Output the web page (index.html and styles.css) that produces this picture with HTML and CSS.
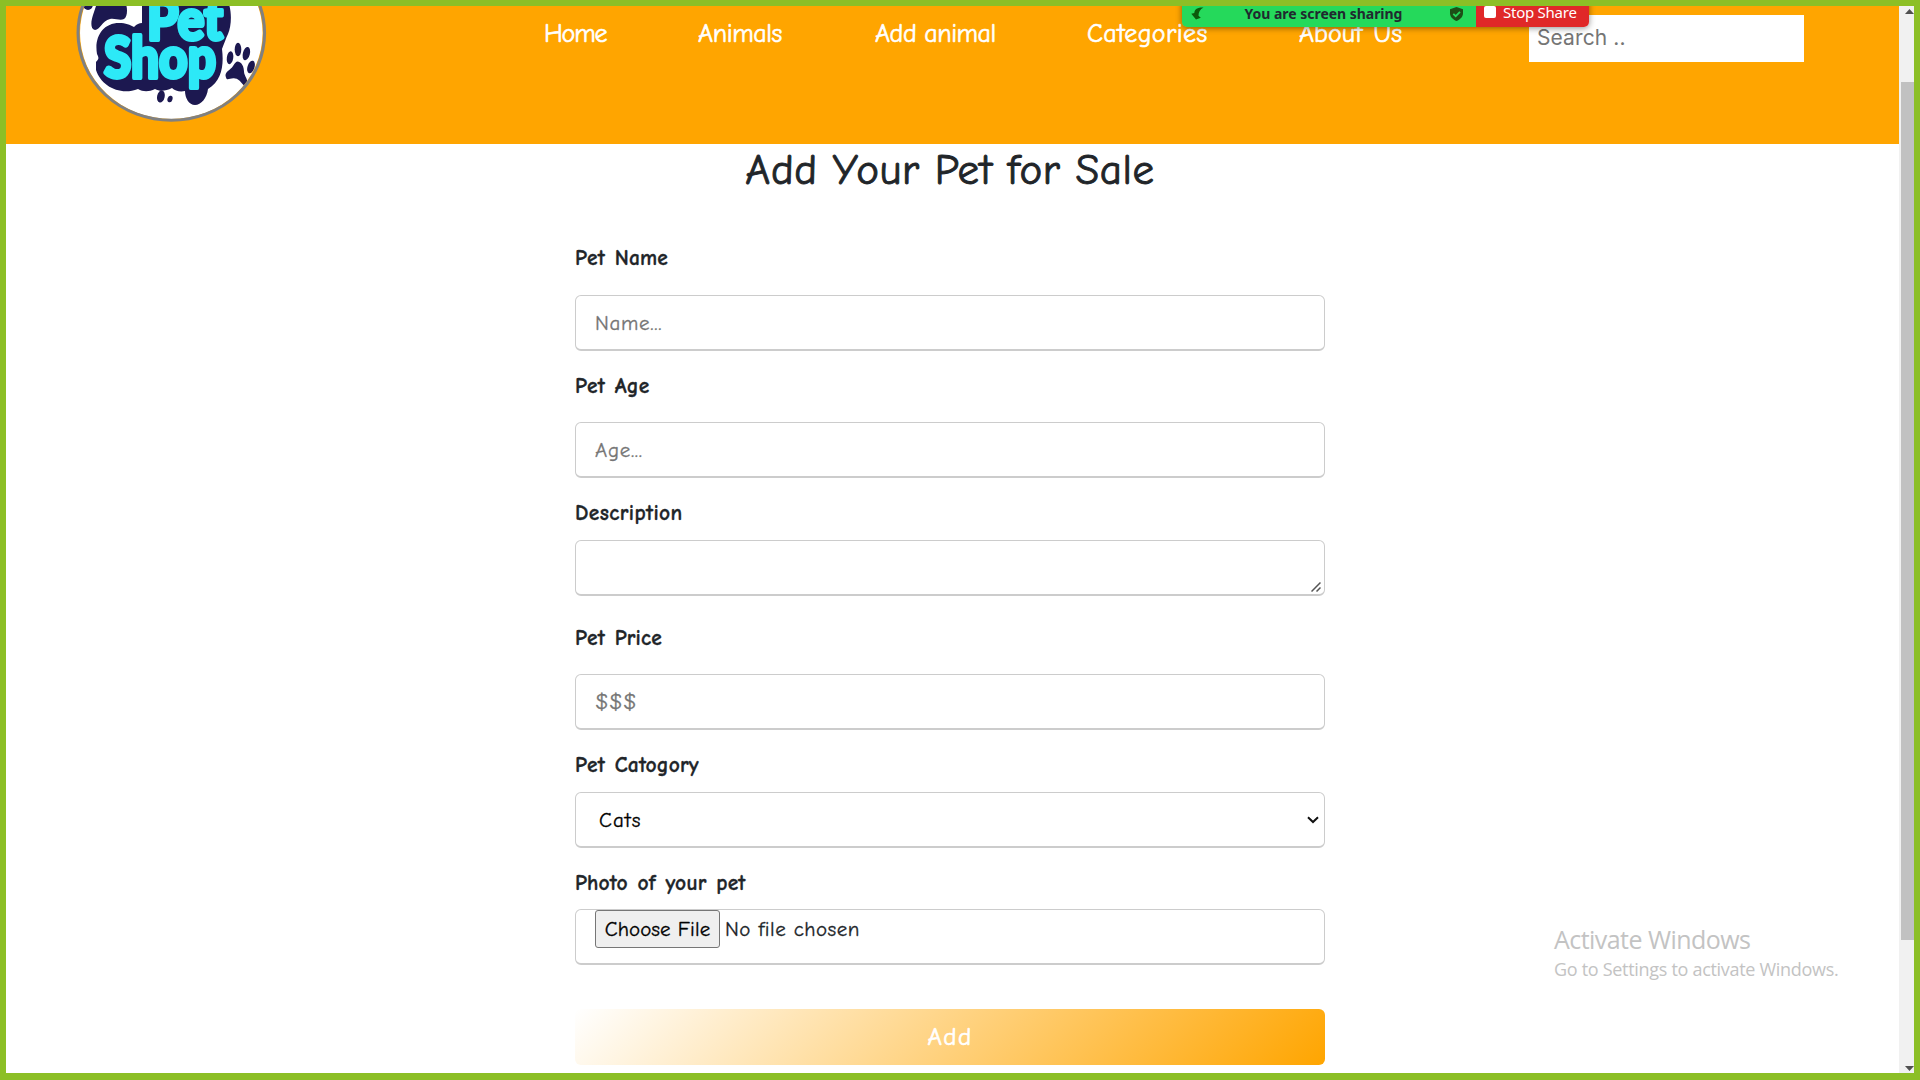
FILE: index.html
```
<!DOCTYPE html>
<html lang="en">
<head>
<meta charset="utf-8">
<title>Pet Shop - Add animal</title>
<link rel="stylesheet" href="styles.css">
</head>
<body>
<div class="screen">
  <div class="page">
    <header class="header">
      <svg class="logo" viewBox="76 6 192 118" width="192" height="118" role="img" aria-label="Pet Shop">
        <defs><clipPath id="disc"><ellipse cx="171.3" cy="33" rx="91.5" ry="86"/></clipPath></defs>
        <ellipse cx="171.3" cy="33" rx="91.3" ry="86" fill="#fff"/>
        <g clip-path="url(#disc)">
          <g fill="#1c1850">
            <ellipse cx="88" cy="4" rx="5" ry="6"/>
            <path d="M98 0h26c4 6 4 16 0 19-4 2-9-1-14 0-8 2-10 11-15 11-5-1-4-9-2-15z"/>
            <path d="M142 0h85c5 8 5 25 1 34-2 4-4 10-6 15 2 16 0 32-14 40-1 9-7 16-13 16-6 0-10-7-10-14-5 1-10 0-13-3-6 3-12 4-17 1-6 3-12 3-17 0-18 7-37-3-42-19v-8c3-3 3-4 1-8-3-17 6-31 22-31 7 0 11 2 15 4 3-3 5-4 8-4z"/>
            <ellipse cx="161" cy="96.500" rx="3.800" ry="6.200" transform="rotate(12 161 96)"/>
            <ellipse cx="170" cy="99" rx="2.500" ry="3.300" transform="rotate(18 170 99)"/>
            <ellipse cx="230" cy="57.700" rx="3.200" ry="6.500" transform="rotate(8 230 58)"/>
            <ellipse cx="238" cy="49.500" rx="3.300" ry="6.800"/>
            <ellipse cx="246.500" cy="53.500" rx="3.500" ry="6.800" transform="rotate(14 246 53)"/>
            <ellipse cx="251" cy="67" rx="3.500" ry="6.500" transform="rotate(18 251 67)"/>
            <path d="M237 61.500c5 0 7 6 7 10 0 5 5 7 3 16-5-2-7-9-12-9-5-1-8 3-9-1-2-5 3-7 6-10 2-3 3-5 5-6z"/>
          </g>
          <g class="logo-text">
            <text x="147" y="40" textLength="76" lengthAdjust="spacingAndGlyphs">Pet</text>
            <text x="104" y="78" textLength="112" lengthAdjust="spacingAndGlyphs">Shop</text>
          </g>
        </g>
        <ellipse cx="171.3" cy="33" rx="93.3" ry="87.300" fill="none" stroke="#808080" stroke-width="3"/>
      </svg>
      <nav class="nav">
        <a class="home">Home</a>
        <a class="animals">Animals</a>
        <a class="add-animal">Add animal</a>
        <a class="categories">Categories</a>
        <a class="about">About Us</a>
      </nav>
      <input class="search" type="text" placeholder="Search ..">
    </header>
    <main class="content">
      <h1 class="title">Add Your Pet for Sale</h1>
      <form class="form">
        <label class="label wide" for="name">Pet Name</label>
        <input class="field" id="name" type="text" placeholder="Name...">
        <label class="label wide age-label" for="age">Pet Age</label>
        <input class="field" id="age" type="text" placeholder="Age...">
        <label class="label description-label" for="desc">Description</label>
        <textarea class="field description" id="desc"></textarea>
        <label class="label wide price-label" for="price">Pet Price</label>
        <input class="field price" id="price" type="text" placeholder="$$$">
        <label class="label" for="category">Pet Catogory</label>
        <select class="field select" id="category"><option>Cats</option></select>
        <label class="label photo-label" for="photo">Photo of your pet</label>
        <input class="field file" id="photo" type="file">
        <button class="submit" type="button">Add</button>
      </form>
    </main>
  </div>
  <div class="scrollbar">
    <svg class="arrow" width="9" height="5" viewBox="0 0 9 5"><path d="M0 5 4.500 0 9 5z" fill="#505050"/></svg>
    <div class="thumb"></div>
    <svg class="arrow" width="9" height="5" viewBox="0 0 9 5"><path d="M0 0 4.500 5 9 0z" fill="#505050"/></svg>
  </div>
  <div class="top-shade"></div>
  <div class="share">
    <div class="share-status">
      <svg width="13" height="13" viewBox="0 0 13 13"><path d="M12.500.5C7 .3 3.500 2 3.300 6L.3 6.700l4.700 5.800 4.800-1.800-2.300-1.900C7.500 5 9 2.500 12.500.5z" fill="#0b5a0b"/></svg>
      <span class="share-text">You are screen sharing</span>
      <svg width="13" height="14" viewBox="0 0 13 14"><path d="M6.500 0 13 2.200V6c0 4-3 6.500-6.500 8C3 12.500 0 10 0 6V2.200z" fill="#1d4f16"/><path d="m3.300 6.800 2.400 2.400 4.300-4.400" fill="none" stroke="#25d95b" stroke-width="1.800"/></svg>
    </div>
    <div class="share-stop"><span class="stop-icon"></span><span>Stop Share</span></div>
  </div>
  <div class="watermark">
    <div class="watermark-title">Activate Windows</div>
    <div class="watermark-text">Go to Settings to activate Windows.</div>
  </div>
</div>
</body>
</html>
```
FILE: styles.css
```
* { box-sizing: border-box; }

body { margin: 0; }

.screen {
  position: relative;
  display: flex;
  width: 1920px;
  height: 1080px;
  border: 6px solid #8cbf26;
  border-bottom-width: 7px;
  overflow: hidden;
  background: #fff;
  font-family: "Comic Sans MS", "Comic Neue", cursive;
}

.page { width: 1893px; }

/* Header */
.header {
  display: flex;
  align-items: flex-start;
  height: 138px;
  padding-left: 70px;
  background: #ffa500;
}

.logo { flex: none; }

.logo-text {
  font-family: Lato, sans-serif;
  font-size: 58px;
  font-weight: 900;
  fill: #2de9f7;
  stroke: #2de9f7;
  stroke-width: 4px;
  stroke-linejoin: round;
}

.nav {
  display: flex;
  gap: 92px;
  width: 985px;
  margin: 12px 0 0 276px;
  color: #fff;
  font-size: 26px;
  line-height: 32px;
  letter-spacing: -0.4px;
  white-space: nowrap;
  -webkit-text-stroke: 0.6px #fff;
}

.home { width: 62px; letter-spacing: -1.2px; }
.animals { width: 85px; }
.add-animal { width: 120px; letter-spacing: -0.5px; }
.categories { width: 120px; letter-spacing: 0.4px; }
.about { width: 103px; letter-spacing: 0; word-spacing: 2px; }

.search {
  width: 275px;
  height: 47px;
  margin-top: 9px;
  padding: 0 8px 2px;
  border: 0;
  font: 21px Inter, sans-serif;
  letter-spacing: 0.1px;
}

.search::placeholder { color: #757575; }

/* Form */
.content {
  display: flex;
  flex-direction: column;
  align-items: center;
  padding: 2px 5px 0 0;
  color: #212529;
}

.title {
  margin: 0 0 48px;
  font-size: 43px;
  font-weight: 400;
  line-height: 48px;
  letter-spacing: 0.6px;
  word-spacing: 0;
  -webkit-text-stroke: 0.9px #212529;
}

.form {
  display: flex;
  flex-direction: column;
  width: 750px;
}

.label {
  height: 32px;
  margin: 0 0 11px;
  font-size: 21.5px;
  font-weight: 700;
  line-height: 33px;
  letter-spacing: 0.15px;
  word-spacing: 2px;
  -webkit-text-stroke: 0.3px #212529;
}

.label.wide { margin-bottom: 21px; }
.label.age-label { margin-bottom: 20px; }
.label.photo-label { margin-bottom: 10px; }
.description-label { letter-spacing: 0.4px; }
.price-label { margin-top: 6px; line-height: 34px; }

.field {
  display: block;
  width: 750px;
  height: 56px;
  margin: 0 0 19px;
  padding: 0 19px;
  border: 1px solid #ccc;
  border-bottom-width: 2px;
  border-radius: 6px;
  background: #fff;
  color: #212529;
  font-family: inherit;
  font-size: 21px;
  line-height: normal;
  -webkit-text-stroke: 0.3px;
}

.field::placeholder {
  color: #757575;
  letter-spacing: 0.7px;
}

.price::placeholder {
  font-size: 23px;
  letter-spacing: 0.2px;
}

.description {
  resize: none;
  background: #fff url("data:image/svg+xml,%3Csvg xmlns='http://www.w3.org/2000/svg' width='10' height='10'%3E%3Cpath d='M.5 9.500 9.500.5M5.500 9.500l4-4' stroke='%23555' stroke-width='1.500'/%3E%3C/svg%3E") no-repeat right 3px bottom 2px;
}

.select {
  appearance: none;
  padding: 0 0 0 23px;
  background: #fff url("data:image/svg+xml,%3Csvg xmlns='http://www.w3.org/2000/svg' width='12' height='8'%3E%3Cpath d='m1 1.200 5 4.800 5-4.800' fill='none' stroke='%23111' stroke-width='2'/%3E%3C/svg%3E") no-repeat right 5px center;
  color: #000;
  letter-spacing: 1px;
}

.file {
  letter-spacing: 0.5px;
  word-spacing: 0;
}

.file::file-selector-button {
  width: 125px;
  height: 38px;
  margin: 0 5px 0 0;
  padding: 0;
  border: 1px solid #767676;
  border-radius: 3px;
  background: #efefef;
  color: #000;
  font: inherit;
  letter-spacing: 0.1px;
}

.submit {
  height: 56px;
  margin-top: 25px;
  padding-bottom: 3px;
  border: 0;
  border-radius: 6px;
  background: linear-gradient(135deg, #fff, #ffa500);
  color: #fff;
  font-family: inherit;
  font-size: 25px;
  letter-spacing: 1.3px;
  -webkit-text-stroke: 0.6px #fff;
}

/* Browser scrollbar */
.scrollbar {
  display: flex;
  flex-direction: column;
  justify-content: space-between;
  align-items: flex-end;
  width: 15px;
  height: 1067px;
  padding: 3px 0 2px;
  background: #f1f1f1;
}

.arrow { display: block; }

.thumb {
  width: 13px;
  height: 858px;
  margin: 68px 0 auto;
  background: #c1c1c1;
}

/* Screen sharing bar */
.top-shade {
  position: absolute;
  top: -6px;
  left: 860px;
  width: 1046px;
  height: 2px;
  background: #79a322;
}

.share {
  position: absolute;
  top: -6px;
  left: 1176px;
  display: flex;
  width: 407px;
  height: 27px;
  border-radius: 0 0 5px 5px;
  overflow: hidden;
  box-shadow: 0 1px 6px rgba(0, 0, 0, 0.45);
  font-family: "Noto Sans", sans-serif;
  font-size: 15px;
  line-height: 26px;
  white-space: nowrap;
}

.share-status {
  display: flex;
  align-items: center;
  justify-content: space-between;
  width: 294px;
  padding: 0 13px 0 9px;
  background: #25d95b;
  color: #20292f;
}

.share-text {
  margin-right: 7px;
  font-size: 14px;
  font-weight: 700;
  letter-spacing: -0.03px;
}

.share-stop {
  display: flex;
  align-items: center;
  gap: 7px;
  flex: 1;
  padding: 0 0 3px 8px;
  background: #e02828;
  color: #fff;
  letter-spacing: -0.25px;
}

.stop-icon {
  width: 12px;
  height: 12px;
  border-radius: 2px;
  background: #fff;
}

/* System watermark */
.watermark {
  position: absolute;
  top: 916px;
  left: 1548px;
  color: #c3c3c3;
  font-family: "Open Sans", sans-serif;
  white-space: nowrap;
}

.watermark-title {
  font-size: 25px;
  line-height: 34px;
  letter-spacing: -0.55px;
}

.watermark-text {
  font-size: 18px;
  line-height: 26px;
  letter-spacing: -0.3px;
}
```
